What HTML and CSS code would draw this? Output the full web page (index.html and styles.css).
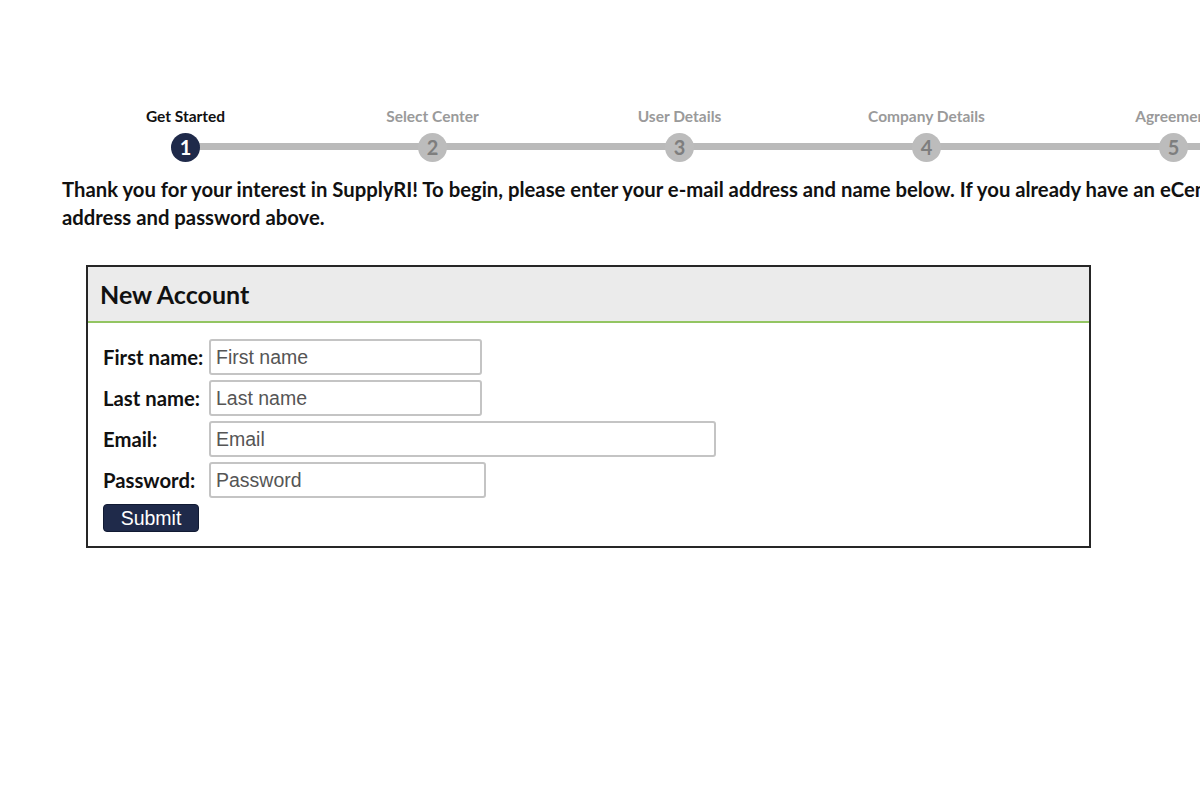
FILE: index.html
```html
<!DOCTYPE html>
<html lang="en">
<head>
    <meta charset="UTF-8">
    <meta name="viewport" content="width=device-width, initial-scale=1.0">
    <title>SupplyRI - New Account</title>
    <link rel="stylesheet" href="styles.css">
</head>
<body>

<div class="page">
    <!-- Registration steps -->
    <ol class="steps">
        <li class="step active">
            <span class="step-label">Get Started</span>
            <span class="step-num">1</span>
        </li>
        <li class="step">
            <span class="step-label">Select Center</span>
            <span class="step-num">2</span>
        </li>
        <li class="step">
            <span class="step-label">User Details</span>
            <span class="step-num">3</span>
        </li>
        <li class="step">
            <span class="step-label">Company Details</span>
            <span class="step-num">4</span>
        </li>
        <li class="step">
            <span class="step-label">Agreement</span>
            <span class="step-num">5</span>
        </li>
        <li class="step last">
            <span class="step-label">Finish</span>
            <span class="step-num">6</span>
        </li>
    </ol>

    <p class="intro">Thank you for your interest in SupplyRI! To begin, please enter your e-mail address and name below. If you already have an eCenter account, please log in with your e-mail address and password above.</p>

    <div class="account-box">
        <div class="account-header">
            <h2>New Account</h2>
        </div>
        <form class="account-form" onsubmit="return false;">
            <div class="form-grid">
                <label for="first-name">First name:</label>
                <input type="text" id="first-name" class="field short" placeholder="First name">

                <label for="last-name">Last name:</label>
                <input type="text" id="last-name" class="field short" placeholder="Last name">

                <label for="email">Email:</label>
                <input type="email" id="email" class="field wide" placeholder="Email">

                <label for="password">Password:</label>
                <input type="password" id="password" class="field pass" placeholder="Password">
            </div>
            <button type="submit" class="submit-btn">Submit</button>
        </form>
    </div>
</div>

</body>
</html>
```

FILE: styles.css
```css
html, body {
    margin: 0;
    background: #fff;
    overflow: hidden;
}

body {
    font-family: Lato, "Liberation Sans", sans-serif;
    color: #111;
}

.page {
    width: 1700px;
    padding: 105px 0 0 62px;
}

/* Steps */
.steps {
    display: flex;
    list-style: none;
    margin: 0;
    padding: 0;
}

.step {
    position: relative;
    width: 247px;
    display: flex;
    flex-direction: column;
    align-items: center;
}

.step::after {
    content: "";
    position: absolute;
    left: 50%;
    top: 38px;
    width: 100%;
    height: 7px;
    background: #bababa;
    z-index: 0;
}

.step-label {
    font-size: 15.5px;
    font-weight: bold;
    color: #9a9a9a;
    line-height: 22px;
    white-space: nowrap;
}

.step.active .step-label {
    color: #111;
}

.step-num {
    position: relative;
    z-index: 1;
    width: 29px;
    height: 29px;
    margin-top: 6px;
    border-radius: 50%;
    background: #bcbcbc;
    color: #7e7e7e;
    font-size: 20px;
    font-weight: bold;
    line-height: 29px;
    text-align: center;
}

.step.active .step-num {
    background: #1f2a4a;
    color: #fff;
}

/* Intro text */
.intro {
    width: 1550px;
    margin: 13px 0 0;
    font-size: 20.3px;
    font-weight: bold;
    line-height: 28px;
    color: #111;
}

/* Account box */
.account-box {
    width: 1001px;
    margin: 34px 0 0 24px;
    border: 2px solid #262626;
}

.account-header {
    background: #ebebeb;
    border-bottom: 2px solid #93c562;
    height: 54px;
    display: flex;
    align-items: center;
    padding-left: 12px;
}

.account-header h2 {
    margin: 0;
    font-size: 25px;
    font-weight: bold;
    color: #111;
}

.account-form {
    padding: 16px 15px 14px;
}

.form-grid {
    display: grid;
    grid-template-columns: 106px auto;
    row-gap: 5px;
    align-items: center;
    justify-items: start;
}

.form-grid label {
    font-size: 20.3px;
    font-weight: bold;
    color: #111;
    white-space: nowrap;
}

.field {
    box-sizing: border-box;
    height: 36px;
    padding: 0 5px;
    border: 2px solid #c4c4c4;
    border-radius: 3px;
    font-family: "Liberation Sans", Arial, sans-serif;
    font-size: 19.5px;
    color: #333;
}

.field::placeholder {
    color: #555;
}

.field.short {
    width: 273px;
}

.field.wide {
    width: 507px;
}

.field.pass {
    width: 277px;
}

.submit-btn {
    display: block;
    margin-top: 6px;
    width: 96px;
    height: 28px;
    padding: 0;
    border: 1px solid #111a33;
    border-radius: 4px;
    background: #1f2a4a;
    color: #fff;
    font-family: "Liberation Sans", Arial, sans-serif;
    font-size: 19.5px;
    cursor: pointer;
}
```
